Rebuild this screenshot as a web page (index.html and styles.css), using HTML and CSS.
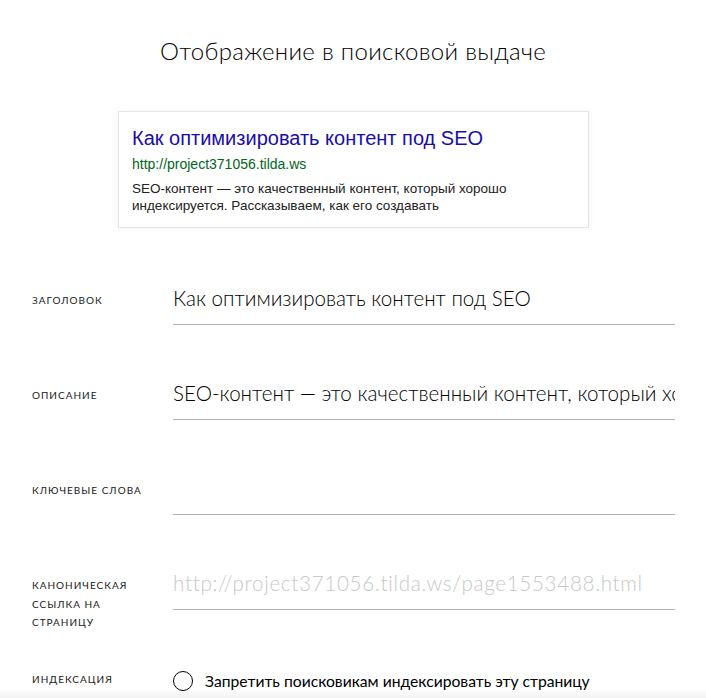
FILE: index.html
```html
<!DOCTYPE html>
<html lang="ru">
<head>
<meta charset="utf-8">
<title>Отображение в поисковой выдаче</title>
<link rel="stylesheet" href="styles.css">
</head>
<body>
<div class="page">
  <h1 class="title">Отображение в поисковой выдаче</h1>

  <div class="snippet">
    <div class="snippet-title">Как оптимизировать контент под SEO</div>
    <div class="snippet-url">http://project371056.tilda.ws</div>
    <div class="snippet-descr">SEO-контент — это качественный контент, который хорошо индексируется. Рассказываем, как его создавать</div>
  </div>

  <form class="form">
    <div class="row">
      <label class="label">Заголовок</label>
      <input class="field" type="text" value="Как оптимизировать контент под SEO">
    </div>
    <div class="row">
      <label class="label">Описание</label>
      <input class="field" type="text" value="SEO-контент — это качественный контент, который хорошо индексируется. Рассказываем, как его создавать">
    </div>
    <div class="row">
      <label class="label">Ключевые слова</label>
      <input class="field" type="text" value="">
    </div>
    <div class="row">
      <label class="label">Каноническая ссылка на страницу</label>
      <input class="field" type="text" placeholder="http://project371056.tilda.ws/page1553488.html">
    </div>
    <div class="row row-check">
      <label class="label">Индексация</label>
      <label class="check">
        <span class="circle"></span>
        <span class="check-text">Запретить поисковикам индексировать эту страницу</span>
      </label>
    </div>
  </form>
</div>
<div class="bottom-fade"></div>
</body>
</html>
```
FILE: styles.css
```css
html, body {
  margin: 0;
  padding: 0;
  background: #fff;
}
body {
  font-family: "Lato", "Open Sans", sans-serif;
  color: #000;
  overflow: hidden;
  height: 698px;
}
.page {
  display: flex;
  flex-direction: column;
}
.title {
  margin: 0;
  padding-top: 33px;
  font-weight: 300;
  font-size: 24px;
  line-height: 36px;
  text-align: center;
  color: #000;
  letter-spacing: 0.3px;
}
.snippet {
  margin: 42px 0 0 118px;
  width: 443px;
  padding: 14px 13px 13px;
  border: 1px solid #e6e6e6;
  box-shadow: 0 0 6px rgba(0,0,0,0.06);
  font-family: "Liberation Sans", Arial, sans-serif;
}
.snippet-title {
  font-size: 20px;
  line-height: 24px;
  color: #1a0dab;
}
.snippet-url {
  margin-top: 5px;
  font-size: 14px;
  line-height: 18px;
  color: #006621;
}
.snippet-descr {
  margin-top: 7px;
  font-size: 13.5px;
  line-height: 17px;
  color: #222;
  width: 380px;
}
.form {
  margin-top: 42px;
  display: flex;
  flex-direction: column;
  gap: 40px;
}
.row {
  display: grid;
  grid-template-columns: 141px 502px;
  padding-left: 32px;
  align-items: start;
  min-height: 55px;
}
.label {
  padding-top: 21px;
  font-size: 10px;
  line-height: 18.5px;
  text-transform: uppercase;
  letter-spacing: 1px;
  color: #1a1a1a;
  width: 120px;
}
.field {
  display: block;
  box-sizing: border-box;
  width: 502px;
  height: 55px;
  margin: 0;
  padding: 13px 0 11px;
  border: 0;
  border-bottom: 1px solid #b3b3b3;
  outline: none;
  background: transparent;
  font-family: "Lato", sans-serif;
  font-weight: 300;
  font-size: 20.6px;
  line-height: 30px;
  color: #000;
}
.field::placeholder {
  color: #c8c8c8;
  letter-spacing: 0.7px;
}
.row-check {
  min-height: 0;
  margin-top: -2px;
}
.row-check .label {
  padding-top: 0;
}
.check {
  display: flex;
  align-items: center;
  gap: 12px;
  margin-top: 1px;
}
.circle {
  box-sizing: border-box;
  width: 20px;
  height: 20px;
  border: 1.5px solid #000;
  border-radius: 50%;
  flex: none;
}
.check-text {
  font-size: 15.7px;
  line-height: 20px;
  font-weight: 400;
}
.bottom-fade {
  position: fixed;
  left: 0;
  right: 0;
  bottom: 0;
  height: 10px;
  background: linear-gradient(to bottom, rgba(0,0,0,0), rgba(0,0,0,0.05));
  pointer-events: none;
}
```
